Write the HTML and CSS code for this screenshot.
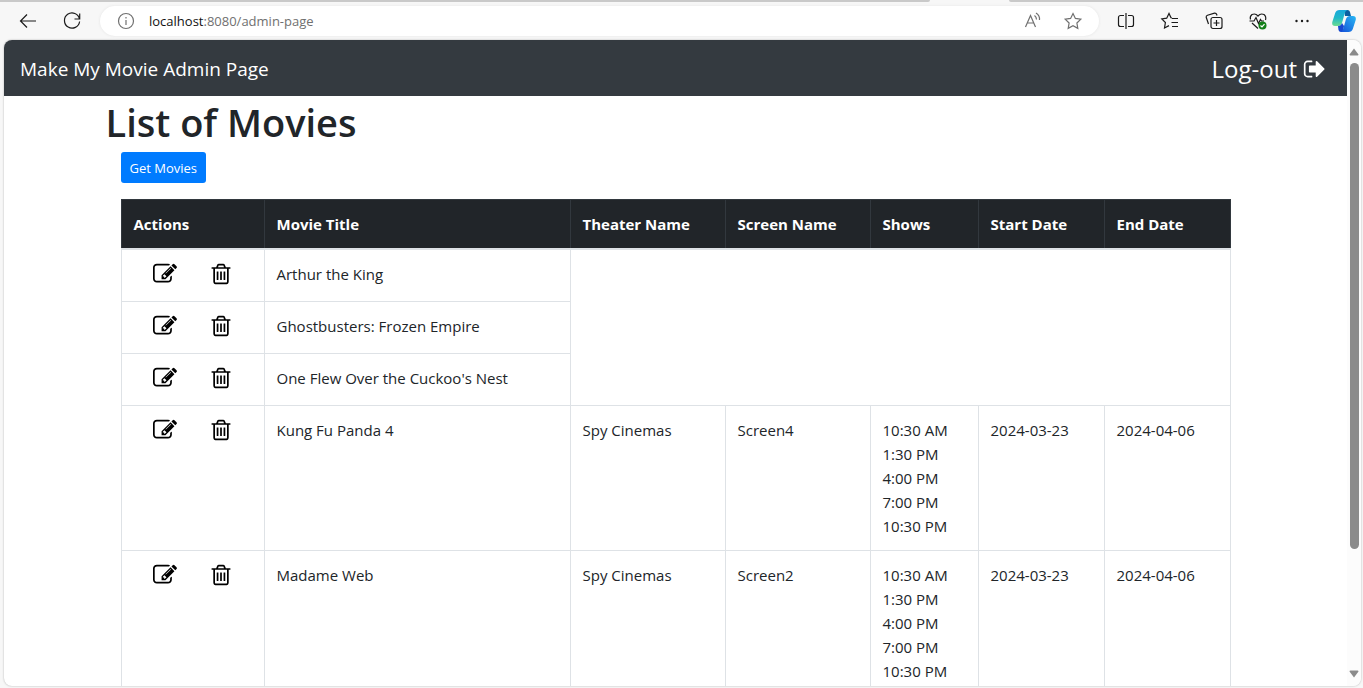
FILE: index.html
```html
<!DOCTYPE html>
<html lang="en">
<head>
<meta charset="utf-8">
<title>Make My Movie Admin Page</title>
<link rel="stylesheet" href="styles.css">
</head>
<body>
<svg class="defs" width="0" height="0" aria-hidden="true">
  <symbol id="edit" viewBox="0 0 1792 1792"><path d="M888 1184l116-116-152-152-116 116v56h96v96h56zm440-720q-16-16-33 1l-350 350q-17 17-1 33t33-1l350-350q17-17 1-33zm80 594v190q0 119-84.5 203.5t-203.5 84.5h-832q-119 0-203.5-84.5t-84.5-203.5v-832q0-119 84.5-203.5t203.5-84.5h832q63 0 117 25 15 7 18 23 3 17-9 29l-49 49q-14 14-32 8-23-6-45-6h-832q-66 0-113 47t-47 113v832q0 66 47 113t113 47h832q66 0 113-47t47-113v-126q0-13 9-22l64-64q15-15 35-7t20 29zm-96-738l288 288-672 672h-288v-288zm444 132l-92 92-288-288 92-92q28-28 68-28t68 28l152 152q28 28 28 68t-28 68z"/></symbol>
  <symbol id="trash" viewBox="0 0 1792 1792"><path d="M704 736v576q0 14-9 23t-23 9h-64q-14 0-23-9t-9-23v-576q0-14 9-23t23-9h64q14 0 23 9t9 23zm256 0v576q0 14-9 23t-23 9h-64q-14 0-23-9t-9-23v-576q0-14 9-23t23-9h64q14 0 23 9t9 23zm256 0v576q0 14-9 23t-23 9h-64q-14 0-23-9t-9-23v-576q0-14 9-23t23-9h64q14 0 23 9t9 23zm128 724v-948h-896v948q0 22 7 40.5t14.5 27 10.5 8.5h832q3 0 10.5-8.5t14.5-27 7-40.5zm-672-1076h448l-48-117q-7-9-17-11h-317q-10 2-17 11zm928 32v64q0 14-9 23t-23 9h-96v948q0 83-47 143.5t-113 60.5h-832q-66 0-113-58.5t-47-141.5v-952h-96q-14 0-23-9t-9-23v-64q0-14 9-23t23-9h309l70-167q15-37 54-63t79-26h320q40 0 79 26t54 63l70 167h309q14 0 23 9t9 23z"/></symbol>
</svg>

<div class="tabstrip"><span class="tabs-left"></span><span class="tabs-right"></span></div>
<header class="toolbar">
  <button class="tool" aria-label="Back"><svg viewBox="0 0 20 20"><path d="M18 10H3M9 3.500L2.500 10L9 16.500"/></svg></button>
  <button class="tool" aria-label="Refresh"><svg viewBox="0 0 20 20"><path d="M17.500 8A7.600 7.600 0 1 0 17.600 10.500M17.700 2.500V8H12.500"/></svg></button>
  <div class="address">
    <svg class="small grey" viewBox="0 0 20 20"><circle cx="10" cy="10" r="7.500"/><path d="M10 9V14M10 6V7.500"/></svg>
    <div class="url" role="textbox" aria-label="Address"><span class="host">localhost</span>:8080/admin-page</div>
    <button class="tool grey" aria-label="Read aloud"><svg viewBox="0 0 20 20"><path d="M2.500 16L7.500 4.500L12.500 16M4.500 12H10.500M11.500 4.500Q13.500 6 13.500 8.500M13 2Q17 4.500 16.500 9"/></svg></button>
    <button class="tool grey" aria-label="Favorite"><svg viewBox="0 0 20 20"><path d="M10 2.500L12.400 7.400L17.800 8.200L13.900 12L14.800 17.400L10 14.800L5.200 17.400L6.100 12L2.200 8.200L7.600 7.400Z"/></svg></button>
  </div>
  <div class="tools">
    <button class="tool" aria-label="Split screen"><svg viewBox="0 0 20 20"><path d="M8 4.500H4.500A2 2 0 0 0 2.500 6.500V13.500A2 2 0 0 0 4.500 15.500H8M12 4.500H15.500A2 2 0 0 1 17.500 6.500V13.500A2 2 0 0 1 15.500 15.500H12M10 2V18"/></svg></button>
    <button class="tool" aria-label="Favorites"><svg viewBox="0 0 20 20"><path d="M12 7.500H18M11.500 11.500H18M12 15.500H18M12 7L11 6.800L9 2.500L6.700 7.200L1.800 8L5.400 11.500L4.500 17L9 14.600"/></svg></button>
    <button class="tool" aria-label="Collections"><svg viewBox="0 0 20 20"><rect x="7" y="6.500" width="11" height="11" rx="2"/><path d="M12.500 9V15M9.500 12H15.500M4.500 13L2.200 6.300Q2 4.700 3.500 4.200L10.500 2.200Q12.200 2 12.700 3.500L13 4.500"/></svg></button>
    <button class="tool" aria-label="Browser essentials"><svg viewBox="0 0 20 20"><path d="M2.500 8.500Q1.500 5.500 4 3.500Q7.500 2 10 5Q12.500 2 16 3.500Q18.500 5.500 17.500 9M1.500 10H6L8 6.500L10.500 12.500L12.500 8.500L13.500 10H16M4 12L10 17.500"/><circle class="badge" cx="14.500" cy="14.500" r="4"/><path class="check" d="M12.500 14.500L14 16L16.500 13.200"/></svg></button>
    <button class="tool" aria-label="More"><svg viewBox="0 0 20 20"><g class="dots"><circle cx="4.500" cy="10" r="1.200"/><circle cx="10" cy="10" r="1.200"/><circle cx="15.500" cy="10" r="1.200"/></g></svg></button>
    <button class="tool copilot" aria-label="Copilot"><svg viewBox="0 0 24 24">
      <defs>
        <linearGradient id="ca" x1="0" y1="0" x2="0" y2="1"><stop offset="0" stop-color="#18a8dc"/><stop offset=".5" stop-color="#20b8c8"/><stop offset="1" stop-color="#6cdc90"/></linearGradient>
        <linearGradient id="cb" x1="1" y1="0" x2="0" y2="1"><stop offset="0" stop-color="#28b8f4"/><stop offset="1" stop-color="#1450d8"/></linearGradient>
      </defs>
      <path fill="#0b5fa0" d="M12 1H15.500Q17.500 1 18 3L19 7H13Z"/>
      <path fill="url(#ca)" d="M7.500 1H15.500Q13.500 1.500 12.800 4L10 14Q9 17 6 17H3Q-.5 17 .3 13L3.200 4Q4.200 1 7.500 1Z"/>
      <path fill="#1648d0" d="M6 17Q9 17 10 14L12 17L11 23H9Q7 23 6.500 21Z"/>
      <path fill="url(#cb)" d="M16.500 23H8.500Q10.500 22.500 11.200 20L14 10Q15 7 18 7H21Q24.500 7 23.700 11L20.800 20Q19.800 23 16.500 23Z"/>
    </svg></button>
  </div>
</header>

<div class="viewport">
  <div class="page">
    <nav class="navbar">
      <a class="brand" href="#">Make My Movie Admin Page</a>
      <a class="logout" href="#">Log-out <svg viewBox="0 0 1664 1792" aria-hidden="true"><path d="M704 1440q0 4 1 20t.5 26.500-3 23.500-10 19.500-20.500 6.500h-320q-119 0-203.500-84.500t-84.500-203.500v-704q0-119 84.500-203.500t203.500-84.500h320q13 0 22.500 9.500t9.500 22.500q0 4 1 20t.5 26.500-3 23.500-10 19.500-20.500 6.500h-320q-66 0-113 47t-47 113v704q0 66 47 113t113 47h312l11.500 1 11.500 3 8 5.500 7 9 2 13.500zm928-544q0 26-19 45l-544 544q-19 19-45 19t-45-19-19-45v-288h-448q-26 0-45-19t-19-45v-384q0-26 19-45t45-19h448v-288q0-26 19-45t45-19 45 19l544 544q19 19 19 45z"/></svg></a>
    </nav>
    <main class="container">
      <h1>List of Movies</h1>
      <div class="content">
        <button class="btn">Get Movies</button>
        <table>
          <colgroup><col class="c-actions"><col><col class="c-theater"><col class="c-screen"><col class="c-shows"><col class="c-date"><col class="c-date"></colgroup>
          <thead>
            <tr><th>Actions</th><th>Movie Title</th><th>Theater Name</th><th>Screen Name</th><th>Shows</th><th>Start Date</th><th>End Date</th></tr>
          </thead>
          <tbody>
            <tr>
              <td><div class="actions"><button aria-label="Edit"><svg><use href="#edit"/></svg></button><button aria-label="Delete"><svg><use href="#trash"/></svg></button></div></td>
              <td>Arthur the King</td><td colspan="5" rowspan="3"></td>
            </tr>
            <tr>
              <td><div class="actions"><button aria-label="Edit"><svg><use href="#edit"/></svg></button><button aria-label="Delete"><svg><use href="#trash"/></svg></button></div></td>
              <td>Ghostbusters: Frozen Empire</td>
            </tr>
            <tr>
              <td><div class="actions"><button aria-label="Edit"><svg><use href="#edit"/></svg></button><button aria-label="Delete"><svg><use href="#trash"/></svg></button></div></td>
              <td>One Flew Over the Cuckoo's Nest</td>
            </tr>
            <tr>
              <td><div class="actions"><button aria-label="Edit"><svg><use href="#edit"/></svg></button><button aria-label="Delete"><svg><use href="#trash"/></svg></button></div></td>
              <td>Kung Fu Panda 4</td><td>Spy Cinemas</td><td>Screen4</td>
              <td>10:30 AM<br>1:30 PM<br>4:00 PM<br>7:00 PM<br>10:30 PM</td><td>2024-03-23</td><td>2024-04-06</td>
            </tr>
            <tr>
              <td><div class="actions"><button aria-label="Edit"><svg><use href="#edit"/></svg></button><button aria-label="Delete"><svg><use href="#trash"/></svg></button></div></td>
              <td>Madame Web</td><td>Spy Cinemas</td><td>Screen2</td>
              <td>10:30 AM<br>1:30 PM<br>4:00 PM<br>7:00 PM<br>10:30 PM</td><td>2024-03-23</td><td>2024-04-06</td>
            </tr>
          </tbody>
        </table>
      </div>
    </main>
  </div>
  <div class="scrollbar" aria-hidden="true">
    <svg viewBox="0 0 10 8"><path d="M5 0.500L9.500 6.500Q9.500 7.500 8.500 7.500H1.500Q.5 7.500 .5 6.500Z"/></svg>
    <div class="track"><div class="thumb"></div></div>
    <svg viewBox="0 0 10 8"><path d="M5 7.500L9.500 1.500Q9.500 .5 8.500 .5H1.500Q.5 .5 .5 1.500Z"/></svg>
  </div>
</div>
</body>
</html>
```
FILE: styles.css
```css
* { box-sizing: border-box; }
body {
  margin: 0;
  height: 100vh;
  display: flex;
  flex-direction: column;
  overflow: hidden;
  background: #f7f7f7;
  color: #212529;
  font: 15px/24px "Open Sans", "Noto Sans", sans-serif;
}
button { font: inherit; border: 0; padding: 0; background: none; }
a { color: inherit; text-decoration: none; }
.defs { position: absolute; }

/* Browser frame */
.tabstrip { display: flex; gap: 79px; height: 2px; flex: none; }
.tabs-left, .tabs-right { background: #c9c9c9; }
.tabs-left { flex: 930; border-bottom-right-radius: 4px; }
.tabs-right { flex: 354; border-bottom-left-radius: 4px; }
.toolbar { display: flex; align-items: center; height: 38px; flex: none; padding: 0 7px 0 18px; }
.tool { display: flex; width: 20px; height: 20px; color: #1b1b1b; flex: none; }
.tool svg, .small { width: 20px; height: 20px; fill: none; stroke: currentColor; stroke-width: 1.2; flex: none; }
.tool + .tool { margin-left: 24px; }
.toolbar .grey { color: #707070; }
.address {
  flex: 1;
  display: flex;
  align-items: center;
  height: 30px;
  margin: 0 17px 0 18px;
  padding: 0 16px;
  border-radius: 15px;
  background: #fff;
  box-shadow: 0 0 3px #e4e4e4;
}
.address .tool + .tool { margin-left: 20px; }
.url { flex: 1; margin-left: 13px; font-size: 13px; color: #707070; }
.host { color: #111; }
.tools { display: flex; }
.tool .dots { fill: #1b1b1b; stroke: none; }
.tool .badge { fill: #138019; stroke: none; }
.tool .check { stroke: #fff; }
.tools .copilot { width: 24px; height: 24px; margin: -2px 0 -2px 20px; }
.copilot svg { width: 24px; height: 24px; stroke: none; }

.viewport {
  flex: 1;
  min-height: 0;
  display: flex;
  margin: 0 2px 2px 4px;
  border-radius: 8px;
  overflow: hidden;
  background: #fff;
  box-shadow: 0 0 2px #aaa;
}
.page { flex: 1; overflow: hidden; }
.scrollbar {
  display: flex;
  flex-direction: column;
  align-items: center;
  gap: 7px;
  width: 14px;
  padding: 8px 0;
  background: #fcfcfc;
}
.scrollbar svg { width: 10px; height: 8px; fill: #8b8b8b; }
.track { flex: 1; }
.thumb { width: 9px; height: 81%; border-radius: 5px; background: #8b8b8b; }

/* Admin page */
.navbar {
  display: flex;
  align-items: center;
  justify-content: space-between;
  height: 56px;
  padding: 2px 22px 0 16px;
  background: #343a40;
  color: #fff;
}
.brand { font-size: 19px; }
.logout { display: flex; align-items: center; gap: 6px; font-size: 24px; }
.logout svg { width: 22px; height: 24px; fill: #fff; }
.container { max-width: 1140px; margin: 0 auto; }
h1 { margin: 0; padding: 2px 0 6px; font-size: 38px; line-height: 48px; font-weight: 600; }
.content { padding: 0 15px; }
.btn {
  display: block;
  height: 31px;
  margin-bottom: 16px;
  padding: 0 9px;
  border-radius: 3px;
  background: #007bff;
  color: #fff;
  font-size: 13px;
}
table { width: 100%; table-layout: fixed; border-collapse: collapse; border: 1px solid #dee2e6; }
th, td { padding: 12px; border: 1px solid #dee2e6; text-align: left; vertical-align: top; }
th { background: #212529; color: #fff; border-color: #32383e; border-bottom: 2px solid #dee2e6; font-weight: 700; }
tbody tr { height: 52px; }
.c-actions { width: 143px; }
.c-theater { width: 155px; }
.c-screen { width: 145px; }
.c-shows { width: 108px; }
.c-date { width: 126px; }
.actions { display: flex; gap: 32px; padding-left: 19px; }
.actions button, .actions svg { display: block; width: 24px; height: 24px; fill: #000; }
```
